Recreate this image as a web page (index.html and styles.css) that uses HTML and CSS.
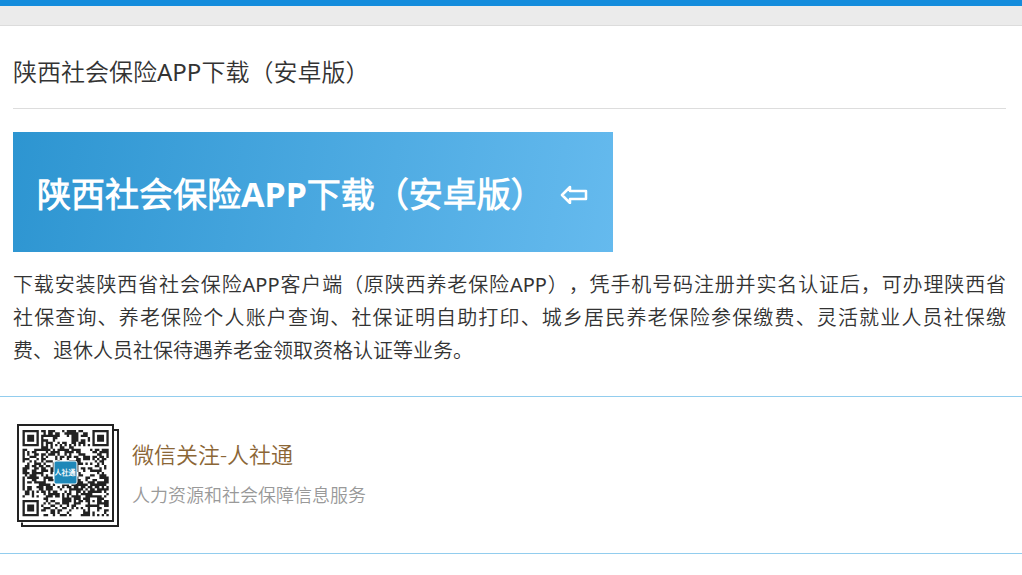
FILE: index.html
```html
<!DOCTYPE html>
<html lang="zh-CN">
<head>
<meta charset="utf-8">
<meta name="viewport" content="width=device-width, initial-scale=1">
<title>陕西社会保险APP下载（安卓版）</title>
<link rel="stylesheet" href="styles.css">
</head>
<body>
<div class="topbar"></div>
<main class="article">
  <h1 class="article-title">陕西社会保险<span class="latin">APP</span>下载（安卓版）</h1>
  <a class="banner" href="#download">
    <span>陕西社会保险APP下载（安卓版）</span>
    <svg class="banner-arrow" viewBox="0 0 28 20" aria-hidden="true"><path d="M2 11 10 3V7H26V15H10V19Z" fill="none" stroke="#fff" stroke-width="2.500" stroke-linejoin="round"/></svg>
  </a>
  <p class="article-text">下载安装陕西省社会保险<span class="latin">APP</span>客户端（原陕西养老保险<span class="latin">APP</span>），凭手机号码注册并实名认证后，可办理陕西省<span class="keep">社保查询</span>、养老保险个人账户查询、社保证明自助打印、城乡居民养老保险参保缴费、灵活就业人员社保缴<span class="keep">费、退休</span>人员社保待遇养老金领取资格认证等业务。</p>
</main>
<section class="follow">
  <svg class="qr" viewBox="0 0 104 104" role="img" aria-label="人社通二维码">
    <path d="M6 98.500V102H102V6H98" fill="none" stroke="#222" stroke-width="2"/>
    <rect x="2" y="1" width="95" height="96" fill="#fff" stroke="#222" stroke-width="2"/>
    <path id="qr-modules" fill="#222" transform="translate(6.500 6) scale(2.330)"/>
    <rect x="38" y="37" width="23" height="23" rx="2" fill="#1f88b8" stroke="#fff"/>
    <text class="qr-label" x="49" y="51" text-anchor="middle">人社通</text>
  </svg>
  <div class="follow-info">
    <h2 class="follow-title">微信关注-人社通</h2>
    <p class="follow-text">人力资源和社会保障信息服务</p>
  </div>
</section>
<script src="qr.js"></script>
</body>
</html>
```
FILE: styles.css
```css
* {
  box-sizing: border-box;
}

body {
  margin: 0;
  background: #fff;
  color: #333;
  font-family: "Noto Sans", "Noto Sans CJK SC DemiLight", "Noto Sans CJK SC", sans-serif;
  font-weight: 350;
  text-spacing-trim: space-all;
}

h1, h2, p {
  margin: 0;
  font-weight: 350;
}

.latin {
  font-weight: 400;
}

.topbar {
  height: 26px;
  background: #ebebeb;
  border-top: 6px solid #148cdc;
  border-bottom: 1px solid #dcdcdc;
}

.article {
  padding: 28px 16px 29px 13px;
}

.article-title {
  padding-bottom: 18px;
  border-bottom: 1px solid #ddd;
  font-size: 24px;
  line-height: 36px;
}

.banner {
  display: flex;
  align-items: center;
  justify-content: space-between;
  width: 600px;
  max-width: 100%;
  min-height: 120px;
  margin: 23px 0 16px;
  padding: 4px 25px 0 24px;
  background: linear-gradient(100deg, #2d95d1, #65baee);
  color: #fff;
  font-size: 34px;
  font-weight: 700;
  line-height: 48px;
  text-decoration: none;
}

.banner-arrow {
  flex: none;
  width: 28px;
  height: 20px;
}

.article-text {
  font-size: 20px;
  line-height: 33px;
  text-align: justify;
}

.keep {
  white-space: nowrap;
}

.follow {
  display: flex;
  gap: 12px;
  padding: 27px 16px 25px;
  border-top: 1px solid #92cdee;
  border-bottom: 1px solid #92cdee;
}

.qr {
  flex: none;
  width: 104px;
  height: 104px;
}

.qr-label {
  fill: #fff;
  font-size: 7px;
  font-weight: 700;
}

.follow-info {
  padding-top: 13px;
}

.follow-title {
  color: #8b6636;
  font-size: 22px;
  line-height: 34px;
}

.follow-text {
  margin-top: 10px;
  color: #999;
  font-size: 18px;
  line-height: 28px;
}
```
FILE: qr.js
```js
// Fills the code's 37 x 37 grid: three finder squares, one alignment square, data modules.
const SIZE = 37;
let seed = 20177;

function square(x, y, left, top, radius) {
  const distance = Math.max(Math.abs(x - left), Math.abs(y - top));
  return distance > radius ? null : distance;
}

function isDark(x, y) {
  seed = (seed * 1103515245 + 12345) % 2147483648;
  const data = seed / 2147483648 < 0.53;
  for (const [cx, cy] of [[3, 3], [33, 3], [3, 33]]) {
    const d = square(x, y, cx, cy, 4);
    if (d !== null) return d !== 2 && d !== 4;
  }
  const a = square(x, y, 30, 30, 2);
  if (a !== null) return a !== 1;
  if (x === 6 || y === 6) return (x + y) % 2 === 0;
  return data;
}

let path = "";
for (let y = 0; y < SIZE; y++) {
  for (let x = 0; x < SIZE; x++) {
    if (isDark(x, y)) path += `M${x} ${y}h1v1h-1z`;
  }
}
document.getElementById("qr-modules").setAttribute("d", path);
```
